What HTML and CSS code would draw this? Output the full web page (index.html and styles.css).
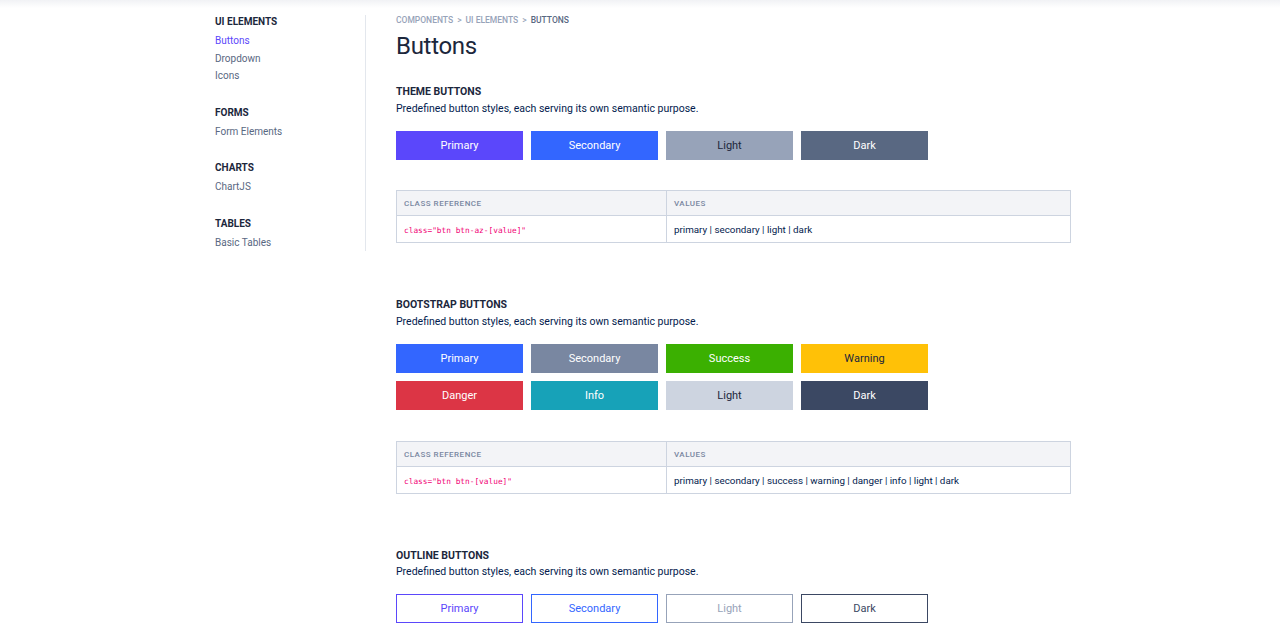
FILE: index.html
```html
<!DOCTYPE html>
<html>
<head>
<meta charset="utf-8">
<link rel="stylesheet" href="styles.css">
</head>
<body>
<div class="topshadow"></div>
<div class="page">
  <aside class="sidebar">
    <div class="nav-group">
      <div class="nav-title">UI Elements</div>
      <a class="nav-link active">Buttons</a>
      <a class="nav-link">Dropdown</a>
      <a class="nav-link">Icons</a>
    </div>
    <div class="nav-group">
      <div class="nav-title">Forms</div>
      <a class="nav-link">Form Elements</a>
    </div>
    <div class="nav-group">
      <div class="nav-title">Charts</div>
      <a class="nav-link">ChartJS</a>
    </div>
    <div class="nav-group">
      <div class="nav-title">Tables</div>
      <a class="nav-link">Basic Tables</a>
    </div>
  </aside>
  <main class="content">
    <div class="breadcrumb"><span>Components</span><span class="sep">&gt;</span><span>UI Elements</span><span class="sep">&gt;</span><span class="cur">Buttons</span></div>
    <h1 class="title">Buttons</h1>

    <section class="section">
      <h2 class="sec-title">Theme Buttons</h2>
      <p class="sec-desc">Predefined button styles, each serving its own semantic purpose.</p>
      <div class="btn-grid">
        <span class="btn az-primary">Primary</span>
        <span class="btn az-secondary">Secondary</span>
        <span class="btn az-light">Light</span>
        <span class="btn az-dark">Dark</span>
      </div>
      <table class="ref">
        <tr><th class="c1">Class Reference</th><th>Values</th></tr>
        <tr><td class="c1"><code>class="btn btn-az-[value]"</code></td><td>primary | secondary | light | dark</td></tr>
      </table>
    </section>

    <section class="section">
      <h2 class="sec-title">Bootstrap Buttons</h2>
      <p class="sec-desc">Predefined button styles, each serving its own semantic purpose.</p>
      <div class="btn-grid">
        <span class="btn bs-primary">Primary</span>
        <span class="btn bs-secondary">Secondary</span>
        <span class="btn bs-success">Success</span>
        <span class="btn bs-warning">Warning</span>
        <span class="btn bs-danger">Danger</span>
        <span class="btn bs-info">Info</span>
        <span class="btn bs-light">Light</span>
        <span class="btn bs-dark">Dark</span>
      </div>
      <table class="ref ref-wide-gap">
        <tr><th class="c1">Class Reference</th><th>Values</th></tr>
        <tr><td class="c1"><code>class="btn btn-[value]"</code></td><td>primary | secondary | success | warning | danger | info | light | dark</td></tr>
      </table>
    </section>

    <section class="section section-last">
      <h2 class="sec-title">Outline Buttons</h2>
      <p class="sec-desc">Predefined button styles, each serving its own semantic purpose.</p>
      <div class="btn-grid">
        <span class="btn ol-primary">Primary</span>
        <span class="btn ol-secondary">Secondary</span>
        <span class="btn ol-light">Light</span>
        <span class="btn ol-dark">Dark</span>
      </div>
    </section>
  </main>
</div>
</body>
</html>
```

FILE: styles.css
```css
* { box-sizing: border-box; }
html, body { margin: 0; padding: 0; background: #fff; }
body {
  font-family: Roboto, "Liberation Sans", Arial, sans-serif;
  color: #031b4e;
  font-size: 11px;
  overflow: hidden;
  height: 640px;
}
.topshadow {
  height: 8px;
  background: linear-gradient(#f1f2f5, #fff);
  margin-bottom: -8px;
}
.page {
  display: flex;
  align-items: flex-start;
  padding-left: 215px;
  padding-top: 15px;
}
.sidebar {
  width: 151px;
  border-right: 1px solid #e3e7ed;
  padding-top: 1px;
}
.nav-group { display: flex; flex-direction: column; margin-bottom: 22px; }
.nav-group:last-child { margin-bottom: 0; }
.nav-title {
  font-size: 10px;
  font-weight: 700;
  text-transform: uppercase;
  color: #1c273c;
  line-height: 12px;
  margin-bottom: 4px;
}
.nav-link {
  font-size: 10px;
  color: #596882;
  line-height: 17.5px;
}
.nav-link.active { color: #5b47fb; }

.content { padding-left: 30px; flex: 0 0 705px; }
.breadcrumb {
  font-size: 8.5px;
  font-weight: 500;
  text-transform: uppercase;
  color: #97a3b9;
  letter-spacing: 0;
  line-height: 10px;
  display: flex;
  gap: 4px;
}
.breadcrumb .cur { color: #596882; }
.title {
  font-size: 24px;
  font-weight: 400;
  color: #1c273c;
  margin: 7px 0 0;
  line-height: 28px;
  letter-spacing: -0.3px;
}
.section { margin-top: 25px; }
.section + .section { margin-top: 55px; }
.sec-title {
  font-size: 10.5px;
  font-weight: 700;
  text-transform: uppercase;
  color: #1c273c;
  margin: 0;
  line-height: 13px;
}
.sec-desc {
  margin: 4px 0 0;
  line-height: 13px;
  font-size: 10.5px;
  color: #031b4e;
}
.btn-grid {
  display: grid;
  grid-template-columns: repeat(4, 127px);
  gap: 8px;
  margin-top: 16px;
}
.section-last .sec-desc { margin-top: 3px; }
.btn {
  height: 29px;
  display: flex;
  align-items: center;
  justify-content: center;
  font-size: 11px;
  color: #fff;
}
.az-primary { background: #5b47fb; }
.az-secondary { background: #3366ff; }
.az-light { background: #97a3b9; color: #1c273c; }
.az-dark { background: #596882; }
.bs-primary { background: #3366ff; }
.bs-secondary { background: #7987a1; }
.bs-success { background: #3bb001; }
.bs-warning { background: #ffc107; color: #1c273c; }
.bs-danger { background: #dc3545; }
.bs-info { background: #17a2b8; }
.bs-light { background: #cdd4e0; color: #1c273c; }
.bs-dark { background: #3b4863; }
.ol-primary { border: 1px solid #5b47fb; color: #5b47fb; }
.ol-secondary { border: 1px solid #3366ff; color: #3366ff; }
.ol-light { border: 1px solid #97a3b9; color: #97a3b9; }
.ol-dark { border: 1px solid #3b4863; color: #3b4863; }

.ref {
  margin-top: 30px;
  width: 675px;
  border-collapse: collapse;
  border: 1px solid #cdd4e0;
}
.ref.ref-wide-gap { margin-top: 31px; }
.ref th, .ref td {
  border: 1px solid #cdd4e0;
  text-align: left;
  padding: 0 7px;
}
.ref th {
  background: #f3f4f7;
  height: 25px;
  font-size: 8px;
  font-weight: 500;
  letter-spacing: 0.5px;
  text-transform: uppercase;
  color: #7987a1;
}
.ref td {
  height: 27px;
  font-size: 9.8px;
  color: #031b4e;
}
.ref .c1 { width: 270px; }
code {
  font-family: "DejaVu Sans Mono", "Liberation Mono", monospace;
  font-size: 7.8px;
  color: #f10075;
}
```
